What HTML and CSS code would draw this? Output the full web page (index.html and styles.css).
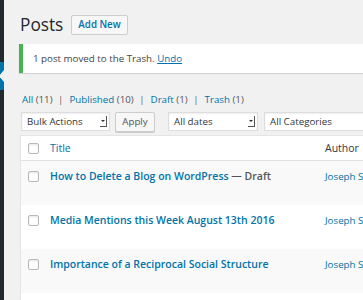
FILE: index.html
```html
<!DOCTYPE html>
<html lang="en">
<head>
    <meta charset="UTF-8">
    <title>Posts</title>
    <link rel="stylesheet" href="styles.css">
</head>
<body>
    <div class="admin-menu">
        <div class="menu-current"></div>
    </div>
    <div class="content">
        <div class="page-title">
            <h1>Posts</h1>
            <span class="btn-add">Add New</span>
        </div>
        <div class="notice">1 post moved to the Trash. <a href="#">Undo</a></div>
        <ul class="subsubsub">
            <li><a href="#">All <span class="count">(11)</span></a> |</li>
            <li><a href="#">Published <span class="count">(10)</span></a> |</li>
            <li><a href="#">Draft <span class="count">(1)</span></a> |</li>
            <li><a href="#">Trash <span class="count">(1)</span></a></li>
        </ul>
        <div class="tablenav">
            <div class="select sel-bulk">Bulk Actions<span class="arrow"></span></div>
            <span class="btn-apply">Apply</span>
            <div class="select sel-dates">All dates<span class="arrow"></span></div>
            <div class="select sel-cats">All Categories<span class="arrow"></span></div>
        </div>
        <div class="posts">
            <div class="row head">
                <div class="cell"><span class="cb"></span></div>
                <div class="cell title-col"><a href="#">Title</a></div>
                <div class="cell author-col">Author</div>
            </div>
            <div class="row alt">
                <div class="cell"><span class="cb"></span></div>
                <div class="cell title-col"><a class="row-title" href="#">How to Delete a Blog on WordPress</a> <span class="state">— Draft</span></div>
                <div class="cell author-col"><a href="#">Joseph Scott</a></div>
            </div>
            <div class="row">
                <div class="cell"><span class="cb"></span></div>
                <div class="cell title-col"><a class="row-title" href="#">Media Mentions this Week August 13th 2016</a></div>
                <div class="cell author-col"><a href="#">Joseph Scott</a></div>
            </div>
            <div class="row alt">
                <div class="cell"><span class="cb"></span></div>
                <div class="cell title-col"><a class="row-title" href="#">Importance of a Reciprocal Social Structure</a></div>
                <div class="cell author-col"><a href="#">Joseph Scott</a></div>
            </div>
            <div class="row">
                <div class="cell"><span class="cb"></span></div>
                <div class="cell title-col"></div>
                <div class="cell author-col"></div>
            </div>
        </div>
    </div>
</body>
</html>
```

FILE: styles.css
```css
body {
    margin: 0;
    display: flex;
    background-color: #f1f1f1;
    font-family: 'Open Sans', 'Liberation Sans', sans-serif;
    font-size: 9.75px;
    color: #444;
    overflow: hidden;
    height: 300px;
}
a {
    color: #0073aa;
    text-decoration: none;
}
.admin-menu {
    width: 4px;
    flex: none;
    background-color: #23282d;
}
.menu-current {
    position: relative;
    margin-top: 62px;
    height: 28px;
    background-color: #0073aa;
}
.menu-current::after {
    content: "";
    position: absolute;
    right: 0;
    top: 8px;
    border: 6px solid transparent;
    border-right: 5px solid #f1f1f1;
    border-left: 0;
}
.content {
    flex: none;
    width: 700px;
    padding: 15px 0 0 15px;
}
.page-title {
    display: flex;
    align-items: flex-start;
    gap: 8px;
    margin-left: 1px;
}
.page-title h1 {
    margin: 0;
    font-size: 17.25px;
    font-weight: 400;
    line-height: 20px;
    color: #23282d;
}
.btn-add {
    height: 18px;
    line-height: 18px;
    padding: 0 6px;
    border: 1px solid #ccc;
    border-radius: 2px;
    background-color: #f7f7f7;
    color: #0073aa;
    font-weight: 600;
}
.notice {
    margin-top: 9px;
    height: 29px;
    line-height: 29px;
    padding-left: 10px;
    background-color: #fff;
    border-left: 4px solid #46b450;
    box-shadow: 0 1px 1px rgba(0, 0, 0, 0.12);
    color: #444;
}
.notice a {
    text-decoration: underline;
}
.subsubsub {
    list-style: none;
    margin: 20px 0 0 3px;
    padding: 0;
    display: flex;
    line-height: 14px;
    color: #666;
}
.subsubsub li {
    margin-right: 6px;
}
.subsubsub a {
    margin-right: 3px;
}
.subsubsub .count {
    color: #555;
}
.tablenav {
    display: flex;
    margin: 5px 0 0 2px;
    height: 20px;
}
.select {
    position: relative;
    box-sizing: border-box;
    height: 19px;
    line-height: 17px;
    padding-left: 5px;
    border: 1px solid #ddd;
    background-color: #fff;
    color: #32373c;
    box-shadow: inset 0 1px 2px rgba(0, 0, 0, 0.07);
}
.select .arrow {
    position: absolute;
    right: 2px;
    top: 3px;
    width: 6px;
    height: 10px;
    border-right: 1px solid #555;
    border-bottom: 1px solid #555;
    background-color: #fafafa;
}
.select .arrow::after {
    content: "";
    position: absolute;
    left: 1px;
    top: 4px;
    border: 2px solid transparent;
    border-top: 2px solid #333;
}
.sel-bulk {
    width: 89px;
}
.sel-dates {
    width: 90px;
    margin-left: 13px;
}
.sel-cats {
    width: 120px;
    margin-left: 6px;
}
.btn-apply {
    box-sizing: border-box;
    margin-left: 5px;
    width: 40px;
    height: 20px;
    line-height: 18px;
    text-align: center;
    border: 1px solid #ccc;
    border-radius: 2px;
    background-color: #f7f7f7;
    box-shadow: 0 1px 0 #ccc;
    color: #555;
}
.posts {
    margin: 3px 0 0 1px;
    border: 1px solid #e5e5e5;
    border-right: none;
    background-color: #fff;
}
.row {
    display: grid;
    grid-template-columns: 23px 275px 1fr;
    height: 44px;
}
.row.alt {
    background-color: #f9f9f9;
}
.row.head {
    height: 24px;
    border-bottom: 1px solid #e1e1e1;
    align-items: center;
}
.row.head .cell {
    padding-top: 0;
}
.cell {
    padding-top: 8px;
    line-height: 15px;
}
.cb {
    display: block;
    box-sizing: border-box;
    width: 11px;
    height: 11px;
    margin: 2px 0 0 7px;
    border: 1px solid #b4b9be;
    border-radius: 2px;
    background-color: #fff;
    box-shadow: inset 0 1px 2px rgba(0, 0, 0, 0.1);
}
.row.head .cb {
    margin-top: 0;
}
.title-col {
    padding-left: 6px;
    font-size: 10.5px;
}
.row-title {
    font-weight: 600;
}
.state {
    font-weight: 600;
    color: #555;
}
.author-col {
    padding-left: 6px;
    color: #32373c;
    font-size: 10.5px;
}
.row .author-col a {
    font-size: 9.75px;
}
```
